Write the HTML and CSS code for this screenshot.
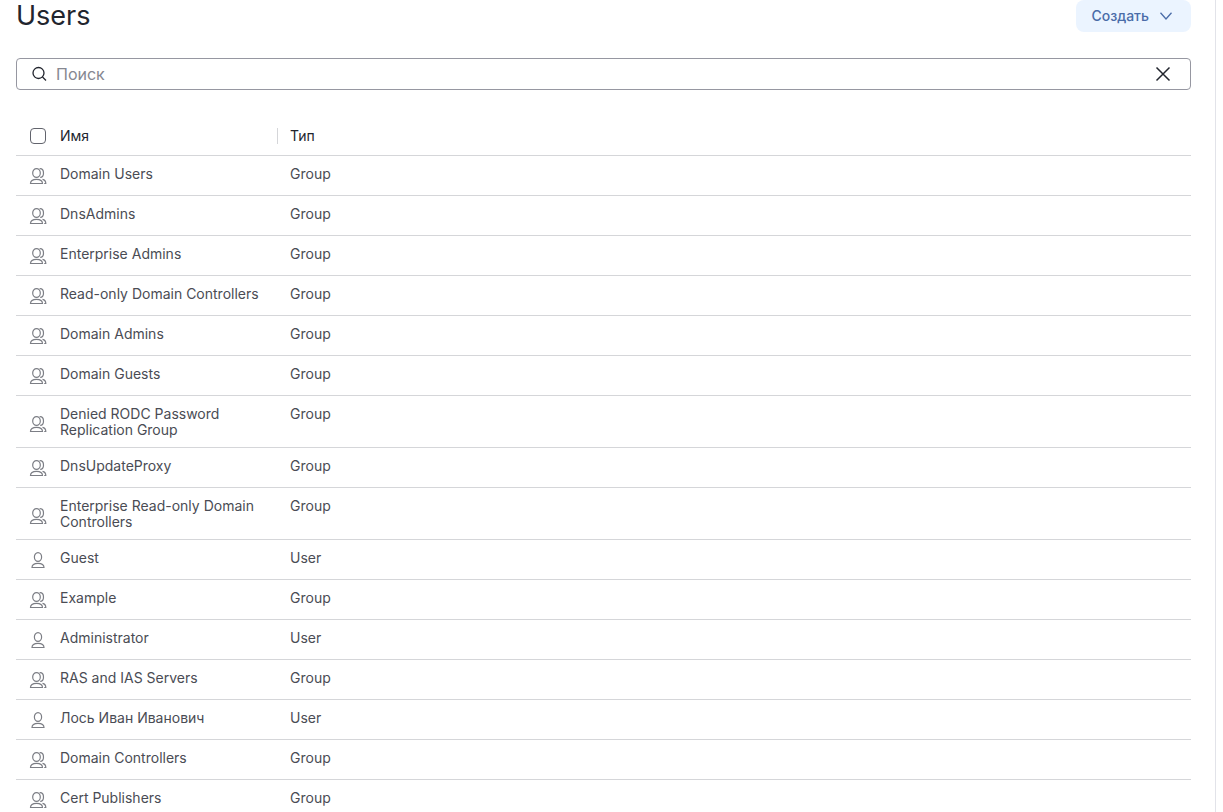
FILE: index.html
```html
<!DOCTYPE html>
<html lang="ru">
<head>
<meta charset="utf-8">
<title>Users</title>
<link rel="stylesheet" href="styles.css">
</head>
<body>
<svg class="sprite" aria-hidden="true">
  <symbol id="group" viewBox="0 0 18 18">
    <ellipse cx="7.500" cy="6" rx="3.800" ry="4.400"/>
    <path d="M10.600 1.600H11C13.200 1.600 14.500 3.400 14.500 6S13.200 10.400 11.200 10.400"/>
    <path d="M1.500 16.500C1.500 13.800 3.500 12.300 7.500 12.300S13.500 13.800 13.500 16.500Z"/>
    <path d="M13.500 12.300C15.800 12.800 16.800 14.200 16.800 16.500H15.200"/>
  </symbol>
  <symbol id="user" viewBox="0 0 18 18">
    <ellipse cx="9" cy="6" rx="3.600" ry="4.400"/>
    <path d="M3 16.500C3 13.800 5 12.300 9 12.300S15 13.800 15 16.500Z"/>
  </symbol>
</svg>
<main class="panel">
  <header class="header">
    <h1 class="title">Users</h1>
    <button class="create" type="button">Создать
      <svg class="chevron" viewBox="0 0 16 16" aria-hidden="true"><path d="M2.500 4.800L8 11L13.500 4.800"/></svg>
    </button>
  </header>
  <div class="search">
    <svg class="search-icon" viewBox="0 0 16 16" aria-hidden="true"><circle cx="7.500" cy="7" r="5.500"/><path d="M11.500 11L15 14.500"/></svg>
    <input class="search-input" type="text" placeholder="Поиск" aria-label="Поиск">
    <button class="clear" type="button" aria-label="Очистить"><svg class="clear-icon" viewBox="0 0 16 16" aria-hidden="true"><path d="M1.500 1.500L14.500 14.500M14.500 1.500L1.500 14.500"/></svg></button>
  </div>
  <table class="table">
    <thead>
      <tr>
        <th class="col-icon"><input class="check" type="checkbox" aria-label="Выбрать все"></th>
        <th class="col-name"><div class="name-head">Имя</div></th>
        <th class="col-type">Тип</th>
      </tr>
    </thead>
    <tbody>
      <tr><td class="col-icon"><svg class="icon"><use href="#group"/></svg></td><td class="col-name">Domain Users</td><td class="col-type">Group</td></tr>
      <tr><td class="col-icon"><svg class="icon"><use href="#group"/></svg></td><td class="col-name">DnsAdmins</td><td class="col-type">Group</td></tr>
      <tr><td class="col-icon"><svg class="icon"><use href="#group"/></svg></td><td class="col-name">Enterprise Admins</td><td class="col-type">Group</td></tr>
      <tr><td class="col-icon"><svg class="icon"><use href="#group"/></svg></td><td class="col-name">Read-only Domain Controllers</td><td class="col-type">Group</td></tr>
      <tr><td class="col-icon"><svg class="icon"><use href="#group"/></svg></td><td class="col-name">Domain Admins</td><td class="col-type">Group</td></tr>
      <tr><td class="col-icon"><svg class="icon"><use href="#group"/></svg></td><td class="col-name">Domain Guests</td><td class="col-type">Group</td></tr>
      <tr class="two-line"><td class="col-icon"><svg class="icon"><use href="#group"/></svg></td><td class="col-name">Denied RODC Password Replication Group</td><td class="col-type">Group</td></tr>
      <tr><td class="col-icon"><svg class="icon"><use href="#group"/></svg></td><td class="col-name">DnsUpdateProxy</td><td class="col-type">Group</td></tr>
      <tr class="two-line"><td class="col-icon"><svg class="icon"><use href="#group"/></svg></td><td class="col-name">Enterprise Read-only Domain Controllers</td><td class="col-type">Group</td></tr>
      <tr><td class="col-icon"><svg class="icon"><use href="#user"/></svg></td><td class="col-name">Guest</td><td class="col-type">User</td></tr>
      <tr><td class="col-icon"><svg class="icon"><use href="#group"/></svg></td><td class="col-name">Example</td><td class="col-type">Group</td></tr>
      <tr><td class="col-icon"><svg class="icon"><use href="#user"/></svg></td><td class="col-name">Administrator</td><td class="col-type">User</td></tr>
      <tr><td class="col-icon"><svg class="icon"><use href="#group"/></svg></td><td class="col-name">RAS and IAS Servers</td><td class="col-type">Group</td></tr>
      <tr><td class="col-icon"><svg class="icon"><use href="#user"/></svg></td><td class="col-name">Лось Иван Иванович</td><td class="col-type">User</td></tr>
      <tr><td class="col-icon"><svg class="icon"><use href="#group"/></svg></td><td class="col-name">Domain Controllers</td><td class="col-type">Group</td></tr>
      <tr><td class="col-icon"><svg class="icon"><use href="#group"/></svg></td><td class="col-name">Cert Publishers</td><td class="col-type">Group</td></tr>
    </tbody>
  </table>
</main>
</body>
</html>
```
FILE: styles.css
```css
* { box-sizing: border-box; }
body {
  margin: 0;
  height: 100vh;
  overflow: hidden;
  background: #fff;
  color: #22252e;
  font-family: Inter, "Liberation Sans", sans-serif;
  font-size: 14px;
  line-height: 16px;
}
.sprite { display: none; }
svg { display: block; fill: none; stroke: currentColor; }
button, input { font: inherit; color: inherit; }
.panel {
  min-height: 100vh;
  margin-right: 7px;
  padding: 0 24px 0 16px;
  border-right: 1px solid #e2e3e9;
}
.header {
  display: flex;
  justify-content: space-between;
  align-items: center;
  height: 32px;
}
.title { margin: 0; font-size: 27px; line-height: 32px; font-weight: 400; }
.create {
  display: flex;
  align-items: center;
  gap: 9px;
  height: 32px;
  padding: 0 17px 0 15px;
  border: 0;
  border-radius: 8px;
  background: #ebf4ff;
  color: #4a6ca8;
  font-weight: 500;
}
.chevron { width: 16px; height: 16px; stroke-width: 1.3; }
.search {
  display: flex;
  align-items: center;
  gap: 9px;
  height: 32px;
  margin: 26px 0;
  padding: 0 18px 0 14px;
  border: 1px solid #9697a1;
  border-radius: 4px;
}
.search-icon { width: 16px; height: 16px; stroke-width: 1.3; }
.search-input {
  flex: 1;
  min-width: 0;
  padding: 0;
  border: 0;
  outline: 0;
  background: none;
  font-size: 16px;
  line-height: 24px;
}
.search-input::placeholder { color: #868891; opacity: 1; }
.clear { padding: 0; border: 0; background: none; }
.clear-icon { width: 18px; height: 16px; stroke-width: 1.5; }
.table { width: 100%; table-layout: fixed; border-collapse: separate; border-spacing: 0; }
.table th, .table td { height: 40px; border-bottom: 1px solid #d5d6d9; text-align: left; }
.table th { padding: 0; vertical-align: middle; font-weight: 400; }
.table td { padding: 10px 0 9px; vertical-align: top; color: #4a4c54; font-weight: 400; }
.table .col-icon { width: 44px; padding: 0 0 0 13px; vertical-align: middle; }
.table .two-line .col-icon { padding-top: 4px; }
.table .col-name { width: 218px; }
.table td.col-name { padding-right: 12px; }
.table .col-type { padding-left: 12px; }
.name-head { border-right: 1px solid #d5d6d9; }
.check {
  display: block;
  appearance: none;
  width: 16px;
  height: 16px;
  margin: 0 0 0 1px;
  border: 1px solid #62646d;
  border-radius: 4px;
  background: #fff;
}
.icon { width: 18px; height: 18px; color: #7c7e85; stroke-width: 1.2; }
```
